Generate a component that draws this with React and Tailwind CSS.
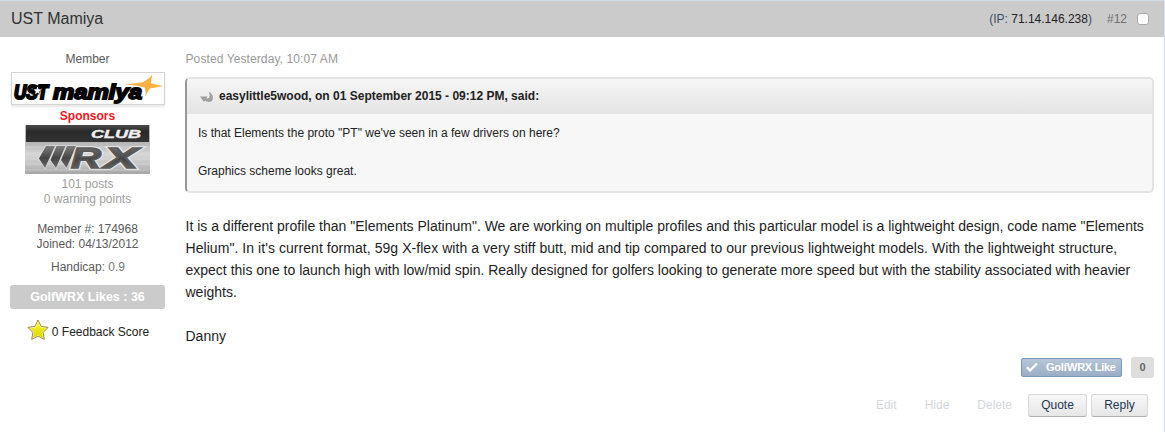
function MamiyaLogo() {
  return (
    <svg className="block h-[31px] w-[152px]" viewBox="0 0 152 31">
      <g fontFamily="Liberation Sans, sans-serif" fontWeight="bold" fontStyle="italic" fill="#050505" stroke="#050505">
        <text x="2" y="25.500" fontSize="20" textLength="34" lengthAdjust="spacingAndGlyphs" strokeWidth="2.2">UST</text>
        <text x="41" y="26" fontSize="20" textLength="89" lengthAdjust="spacingAndGlyphs" strokeWidth="1.8">mamiya</text>
      </g>
      <path d="M21 12.500h9l-2.500 9h-8z" fill="#050505" />
      <path d="M25.500 13.500l1.100 2.800 2.900.2-2.300 1.900.8 2.900-2.500-1.600-2.500 1.600.8-2.900-2.300-1.900 2.900-.2z" fill="#fff" />
      <path d="M112 11.500l18-2Q137 6.500 140.500 1q-1.500 5.500-1.500 9.500l12 2.500-13 2.500q-2.500 2.500-4.500 8.500.500-6-1-9.500-7-2.500-20.500-3z" fill="#fbb040" />
    </svg>
  );
}

function ClubLogo() {
  const slashes = (
    <>
      <path d="M21 21h9l-10 22-6-9.500z" />
      <path d="M31.500 21h9l-9.500 22-5.500-8z" />
      <path d="M42 21h9l-9.500 22-5.500-8z" />
    </>
  );
  const letters = (
    <>
      <text x="46" y="42.500" textLength="30" lengthAdjust="spacingAndGlyphs">R</text>
      <text x="79" y="42.500" textLength="34" lengthAdjust="spacingAndGlyphs">X</text>
    </>
  );
  return (
    <svg className="block h-[49px] w-[125px]" viewBox="0 0 125 49">
      <defs>
        <linearGradient id="clubTop" x2="0" y2="1">
          <stop stopColor="#4a4a4a" />
          <stop offset=".4" stopColor="#292929" />
          <stop offset="1" stopColor="#333" />
        </linearGradient>
        <linearGradient id="metal" x2="0" y2="1">
          <stop stopColor="#bdbdbd" />
          <stop offset=".35" stopColor="#b4b4b4" />
          <stop offset=".6" stopColor="#d6d6d6" />
          <stop offset=".8" stopColor="#c4c4c4" />
          <stop offset="1" stopColor="#a6a6a6" />
        </linearGradient>
        <linearGradient id="steel" x2="0" y2="1">
          <stop stopColor="#7e7e7e" />
          <stop offset=".55" stopColor="#444" />
          <stop offset="1" stopColor="#6c6c6c" />
        </linearGradient>
      </defs>
      <rect width="125" height="49" fill="url(#metal)" />
      <path d="M0 22h125M0 28h125M0 34h125M0 39h125M0 45h125" stroke="#dedede" strokeWidth=".5" />
      <rect x="1" width="123" height="17" fill="url(#clubTop)" />
      <text x="66" y="12.500" fontFamily="Liberation Sans, sans-serif" fontWeight="bold" fontStyle="italic" fontSize="11.5" textLength="50" lengthAdjust="spacingAndGlyphs" fill="#eee" stroke="#eee" strokeWidth=".4">CLUB</text>
      <g fontFamily="Liberation Sans, sans-serif" fontWeight="bold" fontStyle="italic" fontSize="29">
        <g stroke="#e6e6e6" strokeWidth="3.500">{letters}</g>
        <g stroke="#5a5a5a" strokeWidth="1.500" fill="url(#steel)">{letters}</g>
        <g stroke="#e6e6e6" strokeWidth="1.200">{slashes}</g>
        <g fill="url(#steel)">{slashes}</g>
      </g>
    </svg>
  );
}

function Star() {
  return (
    <svg className="block size-[22px]" viewBox="0 0 22 22">
      <defs>
        <linearGradient id="gold" x2="0" y2="1">
          <stop stopColor="#f8f52c" />
          <stop offset="1" stopColor="#dbd800" />
        </linearGradient>
      </defs>
      <path d="M11 1l3.100 6.400 7 1-5 5 1.200 7L11 17.100l-6.300 3.300 1.200-7-5-5 7-1z" fill="#fffbd0" stroke="#9c8932" strokeLinejoin="round" />
      <path d="M11 3.200l2.500 5.200 5.600.8-4.100 4 1 5.600-5-2.600-5 2.600 1-5.600-4.100-4 5.600-.8z" fill="url(#gold)" />
    </svg>
  );
}

function Author() {
  return (
    <aside className="ml-[10px] flex w-[155px] shrink-0 flex-col items-center pt-[15px] text-[12px] leading-[15px] text-[#5a5a5a]">
      <div>Member</div>
      <div className="mt-[5px] ml-px h-[33px] w-[154px] border border-[#d5d5d5] bg-white shadow-[0_2px_2px_rgba(0,0,0,0.1)]">
        <MamiyaLogo />
      </div>
      <div className="mt-[4px] font-bold text-[#f9141e]">Sponsors</div>
      <div className="mt-px"><ClubLogo /></div>
      <div className="mt-[3px] text-[#a0a0a0]">101 posts</div>
      <div className="text-[#a0a0a0]">0 warning points</div>
      <div className="mt-[15px]">Member #: 174968</div>
      <div>Joined: 04/13/2012</div>
      <div className="mt-[8px] pl-px">Handicap: <span className="text-[#777]">0.9</span></div>
      <div className="mt-[10px] h-[24px] w-[155px] rounded-[3px] bg-[#cbcbcb] text-center text-[12.5px] leading-[24px] font-bold text-white">GolfWRX Likes : 36</div>
      <div className="mt-[10px] flex items-center gap-[3px] pl-px text-[#222]">
        <Star />
        <span className="pt-[4px]">0 Feedback Score</span>
      </div>
    </aside>
  );
}

function Quote() {
  return (
    <blockquote className="mt-[10px] h-[116px] w-[969px] rounded-[5px] border-2 border-[#e4e4e4] border-l-[#989898] bg-[#f7f7f7] text-[12px] text-[#222]">
      <div className="flex h-[35px] items-center gap-[6px] rounded-t-[3px] bg-linear-to-b from-[#f6f6f6] to-[#e4e4e4] pb-[2px] pl-[13px] font-bold">
        <svg className="mt-[3px] h-[12px] w-[13px]" viewBox="0 0 13 12">
          <path d="M0 5.500H7.500L6.300 7.500C9.300 8.300 11 5 8.500.5 13.500 3 14 8 11.500 10.200 9.500 11.500 7 11 5 9.500L4 11z" fill="#a0a0a0" />
        </svg>
        <span>easylittle5wood, on 01 September 2015 - 09:12 PM, said:</span>
      </div>
      <div className="pt-[10px] pl-[11px] leading-[19px]">
        <p>Is that Elements the proto "PT" we've seen in a few drivers on here?</p>
        <p className="mt-[19px]">Graphics scheme looks great.</p>
      </div>
    </blockquote>
  );
}

function Body() {
  return (
    <div className="mt-[22px] pl-[0.5px] text-[14px] leading-[22px] whitespace-nowrap text-[#1d1d1d]">
      <p>It is a different profile than "Elements Platinum". We are working on multiple profiles and this particular model is a lightweight design, code name "Elements</p>
      <p className="tracking-[0.055px]">Helium". In it's current format, 59g X-flex with a very stiff butt, mid and tip compared to our previous lightweight models. With the lightweight structure,</p>
      <p>expect this one to launch high with low/mid spin. Really designed for golfers looking to generate more speed but with the stability associated with heavier</p>
      <p>weights.</p>
      <p className="mt-[22px]">Danny</p>
    </div>
  );
}

export default function App() {
  const button = "h-[23px] rounded-[3px] border border-[#d8d8d8] border-b-[#b0b0b0] bg-linear-to-b from-[#f8f8f8] to-[#e6e6e6] pb-px text-[12px] text-[#1d3652]";
  return (
    <div className="h-[432px] overflow-hidden border-t border-r border-t-[#cddbe8] border-r-[#d5dded] bg-white font-['Liberation_Sans',Arial,sans-serif]">
      <header className="flex h-[36px] items-center bg-[#cbcbcb] pr-[15px] pb-px pl-[11px]">
        <h1 className="text-[16px] text-[#323232]">UST Mamiya</h1>
        <div className="ml-auto flex items-center text-[12px] text-[#3c5064]">
          <span>(IP: <span className="text-[#222]">71.14.146.238</span>)</span>
          <span className="ml-[15px] text-[#707070]">#12</span>
          <input type="checkbox" className="mt-px ml-[10px] size-[12px] appearance-none rounded-[3px] border border-[#aaa] bg-white" />
        </div>
      </header>
      <div className="flex">
        <Author />
        <article className="ml-[20px] w-[969px] pt-[15px]">
          <div className="pl-[0.5px] text-[12px] leading-[15px] tracking-[0.1px] text-[#999]">Posted Yesterday, 10:07 AM</div>
          <Quote />
          <Body />
          <div className="mt-[10px] flex h-[21px] items-center justify-end">
            <button className="flex h-[19px] w-[101px] items-center rounded-[2px] border border-[#7898be] bg-linear-to-b from-[#b6c6da] to-[#9aadc5] pl-[4px] text-[11px] font-bold tracking-[-0.25px] text-white">
              <svg className="h-[11px] w-[12px]" viewBox="0 0 12 11"><path d="M1 5l3 3.500L11 1.500" fill="none" stroke="#fff" strokeWidth="2.300" /></svg>
              <span className="ml-[8px]">GolfWRX Like</span>
            </button>
            <span className="ml-[9px] h-[21px] w-[23px] rounded-[3px] bg-[#dedede] text-center text-[11px] leading-[21px] font-bold text-[#666]">0</span>
          </div>
          <div className="mt-[16px] flex items-center justify-end pr-[6px] text-[12px] text-[#d4d7db]">
            <span className="pb-[2px]">Edit</span>
            <span className="ml-[28px] pb-[2px]">Hide</span>
            <span className="ml-[28px] pb-[2px]">Delete</span>
            <button className={button + " ml-[16px] w-[59px]"}>Quote</button>
            <button className={button + " ml-[4px] w-[57px]"}>Reply</button>
          </div>
        </article>
      </div>
    </div>
  );
}
